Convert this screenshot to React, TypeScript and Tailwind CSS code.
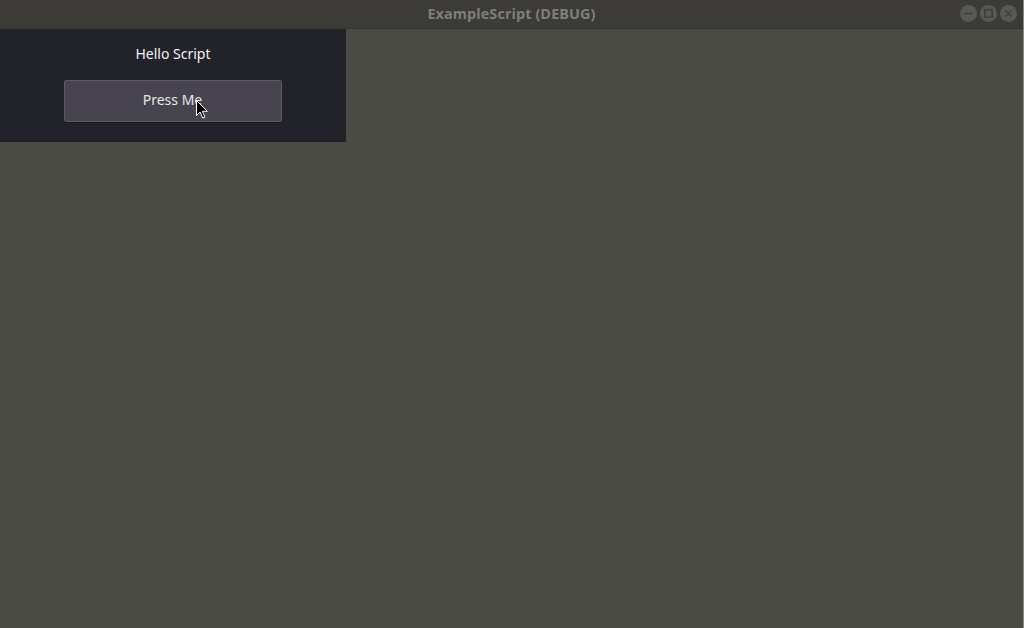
import React from "react";

const WinButton: React.FC<{ kind: "min" | "max" | "close" }> = ({ kind }) => (
  <div className="w-[17px] h-[17px] rounded-full bg-[#595954] flex items-center justify-center">
    <svg width="11" height="11" viewBox="0 0 11 11" fill="none" stroke="#3f3f3a" strokeWidth="1.6">
      {kind === "min" && <path d="M1.5 5.5h8" />}
      {kind === "max" && <rect x="1.8" y="1.8" width="7.4" height="7.4" />}
      {kind === "close" && <path d="M2.5 2.5l6 6M8.5 2.5l-6 6" strokeWidth="1.3" />}
    </svg>
  </div>
);

const App: React.FC = () => {
  return (
    <div className="relative w-[1024px] h-[628px] flex flex-col overflow-hidden bg-[#4b4b45] border-r border-[#8a8a84]">
      {/* Title bar */}
      <div className="relative h-[29px] shrink-0 bg-[#3c3b37] border-b border-[#35342f] flex items-center justify-center pb-[1px]">
        <div className="text-[14.4px] leading-[18px] font-bold text-[#7f7f79] font-['Open_Sans',sans-serif] tracking-[0.1px]">
          ExampleScript (DEBUG)
        </div>
        <div className="absolute right-[6px] top-[5px] flex gap-[3px]">
          <WinButton kind="min" />
          <WinButton kind="max" />
          <WinButton kind="close" />
        </div>
      </div>

      {/* Game viewport */}
      <div className="flex-1 bg-[#4b4b45]">
        <div className="w-[346px] h-[113px] bg-[#22232a] flex flex-col items-center pt-[15px] font-['Noto_Sans',sans-serif]">
          <div className="text-[14px] leading-[20px] text-[#f2f2f2]">Hello Script</div>
          <button className="mt-[16px] w-[218px] h-[42px] ml-[-1px] pb-[3px] rounded-[2px] bg-[#48444f] border border-[#5d5a66] shadow-[0_1px_0_#17171c] text-[14px] leading-[20px] text-[#e6e6e6]">
            Press Me
          </button>
        </div>
      </div>

      {/* Mouse cursor */}
      <svg className="absolute left-[196px] top-[100px]" width="12" height="19" viewBox="0 0 12 19">
        <path d="M0.5 0.5v15l3.6-3.4 2.6 6 2.2-1-2.5-5.8h5z" fill="#000" stroke="#fff" strokeWidth="1" strokeLinejoin="round" />
      </svg>
    </div>
  );
};

export default App;
